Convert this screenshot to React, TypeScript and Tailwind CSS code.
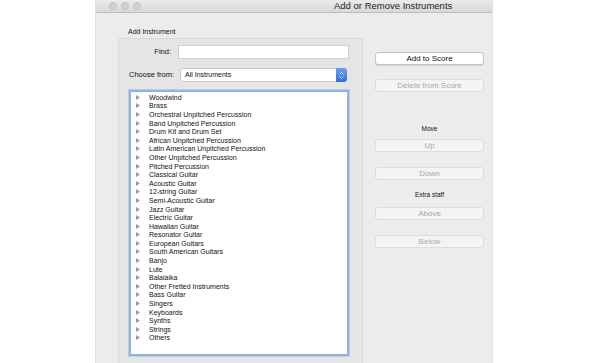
const instruments = [
  "Woodwind",
  "Brass",
  "Orchestral Unpitched Percussion",
  "Band Unpitched Percussion",
  "Drum Kit and Drum Set",
  "African Unpitched Percussion",
  "Latin American Unpitched Percussion",
  "Other Unpitched Percussion",
  "Pitched Percussion",
  "Classical Guitar",
  "Acoustic Guitar",
  "12-string Guitar",
  "Semi-Acoustic Guitar",
  "Jazz Guitar",
  "Electric Guitar",
  "Hawaiian Guitar",
  "Resonator Guitar",
  "European Guitars",
  "South American Guitars",
  "Banjo",
  "Lute",
  "Balalaika",
  "Other Fretted Instruments",
  "Bass Guitar",
  "Singers",
  "Keyboards",
  "Synths",
  "Strings",
  "Others",
];

function MacButton({ label, enabled = false, className = "" }: { label: string; enabled?: boolean; className?: string }) {
  return (
    <div
      className={
        "h-[13px] rounded-[3px] border flex items-center justify-center text-[8px] leading-none " +
        (enabled
          ? "bg-white border-[#c4c4c4] text-[#111] shadow-[0_1px_0_#d0d0d0] "
          : "bg-[#f4f4f4] border-[#dcdcdc] text-[#a8a8a8] ") +
        className
      }
    >
      {label}
    </div>
  );
}

export default function App() {
  return (
    <div className="w-[600px] h-[363px] bg-white overflow-hidden" style={{ fontFamily: '"Liberation Sans", Arial, sans-serif' }}>
      <div className="ml-[95px] w-[398px] h-full flex flex-col bg-[#ececec] border-x border-[#e0e0e0]">
        {/* title bar */}
        <div className="h-[13px] flex items-center bg-gradient-to-b from-[#ebebeb] to-[#d8d8d8] border-b border-[#bdbdbd]">
          <div className="flex gap-[4px] ml-[13px]">
            <span className="w-[8px] h-[8px] rounded-full bg-[#d2d2d2] border border-[#c2c2c2]" />
            <span className="w-[8px] h-[8px] rounded-full bg-[#d2d2d2] border border-[#c2c2c2]" />
            <span className="w-[8px] h-[8px] rounded-full bg-[#d2d2d2] border border-[#c2c2c2]" />
          </div>
          <div className="ml-[193px] text-[9.5px] text-[#222]">Add or Remove Instruments</div>
        </div>

        {/* body */}
        <div className="flex flex-1 min-h-0">
          {/* left */}
          <div className="ml-[22px] w-[245px] flex flex-col">
            <div className="pt-[14px] pl-[10px] h-[25px] text-[7px] leading-[9px] text-[#111]">Add Instrument</div>
            <div className="flex-1 bg-[#e5e5e5] rounded-t-[3px] border-t border-x border-[#dadada] pt-[6px] pl-[10px] pr-[13px] flex flex-col">
              <div className="flex items-center h-[14px]">
                <div className="w-[42px] text-right text-[7.5px] text-[#111]">Find:</div>
                <div className="ml-[7px] flex-1 h-[14px] bg-white border border-[#cfcfcf]" />
              </div>
              <div className="flex items-center h-[14px] mt-[9px]">
                <div className="w-[42px] text-right text-[7.5px] text-[#111] whitespace-nowrap">Choose from:</div>
                <div className="ml-[9px] mr-[2px] flex-1 h-[14px] bg-white border border-[#c9c9c9] rounded-[3px] flex items-center">
                  <span className="flex-1 pl-[4px] text-[7px] text-[#111]">All Instruments</span>
                  <span className="w-[11px] h-[14px] -mr-px rounded-r-[3px] bg-gradient-to-b from-[#6aa2f2] to-[#2f6fe0] flex flex-col items-center justify-center gap-[1px]">
                    <svg width="5" height="3" viewBox="0 0 5 3"><path d="M0.5 2.5 L2.5 0.5 L4.5 2.5" fill="none" stroke="white" strokeWidth="0.8" /></svg>
                    <svg width="5" height="3" viewBox="0 0 5 3"><path d="M0.5 0.5 L2.5 2.5 L4.5 0.5" fill="none" stroke="white" strokeWidth="0.8" /></svg>
                  </span>
                </div>
              </div>
              <div className="mt-[8px] h-[266px] bg-white border-2 border-[#8fb2de] shadow-[0_0_0_1px_#b7cde9] pt-[1px] pl-[4px]">
                {instruments.map((name) => (
                  <div key={name} className="h-[8.6px] flex items-center">
                    <svg width="4" height="5" viewBox="0 0 4 5" className="ml-[1px]">
                      <path d="M0 0 L4 2.5 L0 5 Z" fill="#9a9a9a" />
                    </svg>
                    <span className="ml-[9px] text-[7px] leading-none text-[#111] whitespace-nowrap">{name}</span>
                  </div>
                ))}
              </div>
            </div>
          </div>

          {/* right */}
          <div className="ml-[12px] w-[109px] flex flex-col">
            <MacButton label="Add to Score" enabled className="mt-[39px]" />
            <MacButton label="Delete from Score" className="mt-[14px]" />
            <div className="mt-[32px] h-[9px] text-center text-[6.5px] leading-[9px] text-[#111]">Move</div>
            <MacButton label="Up" className="mt-[6px]" />
            <MacButton label="Down" className="mt-[15px]" />
            <div className="mt-[10px] h-[9px] text-center text-[6.5px] leading-[9px] text-[#111]">Extra staff</div>
            <MacButton label="Above" className="mt-[8px]" />
            <MacButton label="Below" className="mt-[15px]" />
          </div>
        </div>
      </div>
    </div>
  );
}
